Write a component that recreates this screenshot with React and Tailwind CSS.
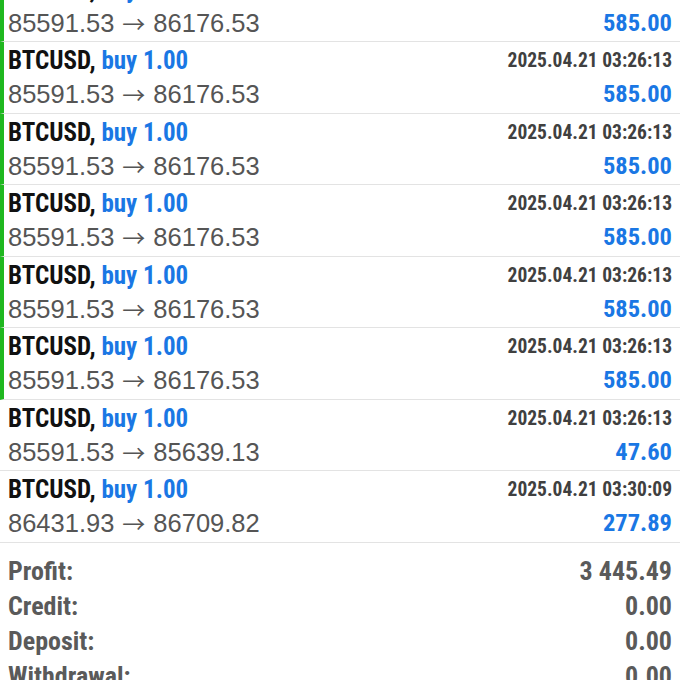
const rows = [
  { green: true, date: '2025.04.21 03:26:13', from: '85591.53', to: '86176.53', p: '585.00' },
  { green: true, date: '2025.04.21 03:26:13', from: '85591.53', to: '86176.53', p: '585.00' },
  { green: true, date: '2025.04.21 03:26:13', from: '85591.53', to: '86176.53', p: '585.00' },
  { green: true, date: '2025.04.21 03:26:13', from: '85591.53', to: '86176.53', p: '585.00' },
  { green: true, date: '2025.04.21 03:26:13', from: '85591.53', to: '86176.53', p: '585.00' },
  { green: true, date: '2025.04.21 03:26:13', from: '85591.53', to: '86176.53', p: '585.00' },
  { green: false, date: '2025.04.21 03:26:13', from: '85591.53', to: '85639.13', p: '47.60' },
  { green: false, date: '2025.04.21 03:30:09', from: '86431.93', to: '86709.82', p: '277.89' },
];

const cond = { fontFamily: '"Roboto Condensed", Roboto, sans-serif' };
const reg = { fontFamily: '"Liberation Sans", Arial, sans-serif' };
const arrow = { fontFamily: '"Noto Sans CJK SC", "DejaVu Sans", sans-serif' };

function Row({ r }) {
  return (
    <div
      className={
        'flex h-[71.5px] justify-between border-b-[1.5px] border-[#e3e3e3] pr-2 ' +
        (r.green ? 'border-l-4 border-l-[#1fb81f] pl-1' : 'pl-2')
      }
    >
      <div className="flex flex-col pt-[5px]">
        <div style={cond} className="text-[25px] font-bold leading-[28px] text-[#111]">
          BTCUSD, <span className="text-[#1a77e4]">buy 1.00</span>
        </div>
        <div style={reg} className="mt-[5px] flex items-center text-[25.5px] leading-[28px] text-[#555]">
          <span>{r.from}</span>
          <span style={arrow} className="mx-[8px] text-[23px] leading-[28px]">→</span>
          <span>{r.to}</span>
        </div>
      </div>
      <div className="flex flex-col items-end pt-[8px]">
        <div style={cond} className="text-[19.5px] font-bold leading-[22px] text-[#404040]">
          {r.date}
        </div>
        <div style={cond} className="mt-[8px] text-[24.5px] font-bold leading-[28px] text-[#1a77e4]">
          {r.p}
        </div>
      </div>
    </div>
  );
}

export default function App() {
  const sums = [
    ['Profit:', '3 445.49'],
    ['Credit:', '0.00'],
    ['Deposit:', '0.00'],
    ['Withdrawal:', '0.00'],
  ];
  return (
    <div className="h-[680px] w-[680px] overflow-hidden bg-white">
      <div className="mt-[-29.5px]">
        {rows.map((r, i) => (
          <Row key={i} r={r} />
        ))}
      </div>
      <div className="flex flex-col pt-[11px] pl-2 pr-2">
        {sums.map(([k, v]) => (
          <div key={k} style={cond} className="flex h-[35px] items-center justify-between text-[26px] font-bold text-[#5a5a5a]">
            <span>{k}</span>
            <span>{v}</span>
          </div>
        ))}
      </div>
    </div>
  );
}
